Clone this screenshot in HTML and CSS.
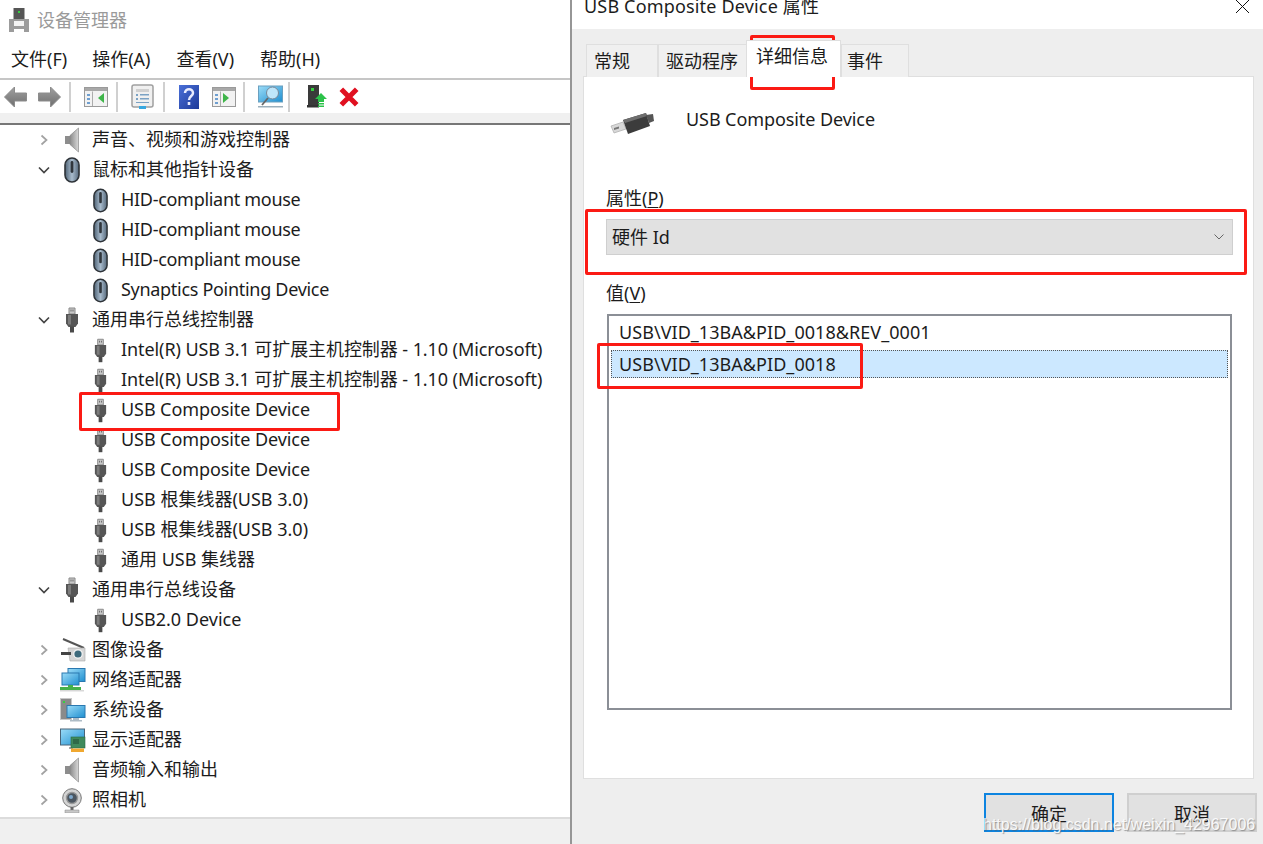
FILE: index.html
```html
<!DOCTYPE html>
<html lang="zh-CN">
<head>
<meta charset="utf-8">
<title>设备管理器</title>
<link rel="stylesheet" href="styles.css">
</head>
<body>
<svg class="defs" aria-hidden="true">
  <defs>
    <linearGradient id="gMouse" x1="0" x2="1" y1="0" y2="0"><stop offset="0" stop-color="#4f6376"/><stop offset=".5" stop-color="#a9bccd"/><stop offset="1" stop-color="#56697c"/></linearGradient>
    <linearGradient id="gSpk" x1="0" x2="1" y1="0" y2="0"><stop offset="0" stop-color="#8c8c8c"/><stop offset="1" stop-color="#d8d8d8"/></linearGradient>
    <linearGradient id="gScreen" x1="0" x2="1" y1="0" y2="1"><stop offset="0" stop-color="#9bdcf8"/><stop offset="1" stop-color="#1f8fd0"/></linearGradient>
    <linearGradient id="gHelp" x1="0" x2="1" y1="0" y2="1"><stop offset="0" stop-color="#4a6fd8"/><stop offset="1" stop-color="#1d3a98"/></linearGradient>
    <linearGradient id="gArrow" x1="0" x2="0" y1="0" y2="1"><stop offset="0" stop-color="#a0a0a0"/><stop offset="1" stop-color="#6e6e6e"/></linearGradient>
    <symbol id="usb" viewBox="0 0 16 25">
      <path d="M5 0.5h6v6H5z" fill="#c9c9c9" stroke="#888"/>
      <path d="M6.5 2h1v2h-1zM8.5 2h1v2h-1z" fill="#666"/>
      <path d="M2 6.5h12V16l-2.5 3.5h-7L2 16z" fill="#565656"/>
      <path d="M4 7.5h3V17H4z" fill="#7c7c7c"/>
      <path d="M6 19h4v6H6z" fill="#4a4a4a"/>
    </symbol>
    <symbol id="mouse" viewBox="0 0 16 26">
      <rect x="1" y="1" width="14" height="24" rx="7" fill="url(#gMouse)" stroke="#2e3338" stroke-width="1.6"/>
      <rect x="6.6" y="4" width="2.8" height="12" rx="1.4" fill="#30363c"/>
    </symbol>
    <symbol id="speaker" viewBox="0 0 16 26">
      <path d="M1 9h5v8H1z" fill="#8d8d8d"/>
      <path d="M6 8.500 14.500 1v24L6 17.500z" fill="url(#gSpk)" stroke="#8a8a8a" stroke-width=".7"/>
    </symbol>
    <symbol id="imaging" viewBox="0 0 26 24">
      <path d="M3 1 24 10" stroke="#555" stroke-width="2"/>
      <path d="M8 10h17v13H10z" fill="#d5d5d5" stroke="#aaa" stroke-width=".6"/>
      <path d="M1 14h10v3H1z" fill="#444"/>
      <circle cx="18" cy="16" r="4.300" fill="#3e6a7c" stroke="#eee" stroke-width="1.400"/>
    </symbol>
    <symbol id="network" viewBox="0 0 26 24">
      <rect x="8" y="0.500" width="17" height="13" fill="url(#gScreen)" stroke="#2a78b0"/>
      <rect x="2" y="5" width="17" height="12" fill="url(#gScreen)" stroke="#2a78b0"/>
      <path d="M8 17h5v2h8v3H0v-3h8z" fill="#46b04a"/>
      <path d="M0 22h24v1.500H0z" fill="#d8d8d8"/>
    </symbol>
    <symbol id="system" viewBox="0 0 26 24">
      <rect x="0.500" y="0.500" width="11" height="21" fill="#8a8a8a" stroke="#c8c8c8"/>
      <path d="M3 3h2v2H3z" fill="#35d040"/>
      <rect x="7" y="7.500" width="18" height="12" fill="url(#gScreen)" stroke="#2a78b0"/>
      <path d="M13 20h6v2h3v1.500H10V22h3z" fill="#aebcc6"/>
    </symbol>
    <symbol id="display" viewBox="0 0 26 24">
      <rect x="0.500" y="1" width="24" height="16" fill="url(#gScreen)" stroke="#4a6478"/>
      <path d="M9 19h4v2H9z" fill="#aaa"/>
      <rect x="11" y="9" width="14" height="11" fill="#3f8a5c" stroke="#2a6a44" stroke-width=".6"/>
      <path d="M13 11h6v5h-6z" fill="#2e6a48"/>
      <path d="M11 20.500h13V24H11z" fill="#f0a830"/>
    </symbol>
    <symbol id="webcam" viewBox="0 0 20 25">
      <circle cx="10" cy="10" r="9.300" fill="#d4d4d4" stroke="#777"/>
      <circle cx="10" cy="10" r="5.500" fill="#4c5660" stroke="#999" stroke-width="1.400"/>
      <circle cx="9" cy="9" r="2" fill="#7fa8cc"/>
      <path d="M8.500 19h3v3h-3z" fill="#666"/>
      <path d="M3 22h14v3H3z" fill="#c8c8c8" stroke="#888" stroke-width=".5"/>
    </symbol>
    <symbol id="chev-r" viewBox="0 0 10 12"><path d="M2.500 1.500 7.500 6l-5 4.500" fill="none" stroke="#a2a2a2" stroke-width="1.700"/></symbol>
    <symbol id="chev-d" viewBox="0 0 12 10"><path d="M1 2.500 6 7.500l5-5" fill="none" stroke="#444" stroke-width="1.700"/></symbol>
    <symbol id="panel" viewBox="0 0 24 20">
      <rect x=".5" y=".5" width="23" height="19" fill="#f2f2f2" stroke="#9a9a9a"/>
      <path d="M1 1h22v3H1z" fill="#a8a8a8"/>
      <path d="M8 4.500h.8V19H8z" fill="#9a9a9a"/>
      <path d="M3 7h3v2H3zM3 11h3v2H3zM3 15h3v2H3z" fill="#6f9fd0"/>
    </symbol>
  </defs>
</svg>

<main class="manager">
  <header class="titlebar">
    <svg class="app-icon" viewBox="0 0 20 24" aria-hidden="true">
      <path d="M7 0h11v11H7z" transform="translate(-2.500 0)" fill="#555"/><path d="M9 3h2v2H9z" fill="#35d040"/>
      <path d="M0 11h20v13h-5v-3H5v3H0z" fill="#9c9c9c"/><path d="M5 13h10v5H5z" fill="#f4f4f4"/>
    </svg>
    <span class="app-title">设备管理器</span>
  </header>
  <nav class="menubar">
    <span class="menu-first">文件(F)</span><span>操作(A)</span><span>查看(V)</span><span>帮助(H)</span>
  </nav>
  <div class="toolbar">
    <svg class="tb tb-arrow" viewBox="0 0 24 22"><path d="M11 1 1 11l10 10v-6h12V7H11z" fill="url(#gArrow)" stroke="#8c8c8c"/></svg>
    <svg class="tb tb-arrow tb-arrow2" viewBox="0 0 24 22"><path d="M13 1l10 10-10 10v-6H1V7h12z" fill="url(#gArrow)" stroke="#8c8c8c"/></svg>
    <i class="sep sep1"></i>
    <svg class="tb tb-panel"><use href="#panel"/><path d="M20 6v10l-6-5z" fill="#3fb54a"/></svg>
    <i class="sep sep2"></i>
    <svg class="tb tb-props" viewBox="0 0 23 25"><rect x="1" y="1" width="21" height="22" rx="2" fill="#f0f0f0" stroke="#a0a0a0" stroke-width="1.500"/><path d="M5 5h13v3H5z" fill="#d0d0d0"/><path d="M5 10h2v2H5zM5 14h2v2H5zM9 10h9v1.500H9zM9 14h9v1.500H9zM5 18h13v1H5z" fill="#7ba2c4"/><path d="M8 22h7v3H8z" fill="#38a8e0"/></svg>
    <i class="sep sep3"></i>
    <svg class="tb tb-help" viewBox="0 0 20 24"><rect width="20" height="24" fill="url(#gHelp)"/><path d="M6 8c0-5 8-5 8 0 0 3-4 3-4 7" fill="none" stroke="#e8ecff" stroke-width="2.500"/><path d="M8.700 17h2.600v3H8.700z" fill="#e8ecff"/></svg>
    <svg class="tb tb-panel tb-panel2"><use href="#panel"/><path d="M11 6v10l6-5z" fill="#3fb54a"/></svg>
    <i class="sep sep4"></i>
    <svg class="tb tb-scan" viewBox="0 0 25 24"><rect x=".5" y="1" width="24" height="16" fill="url(#gScreen)" stroke="#6aa0c0"/><circle cx="14.500" cy="8" r="6" fill="#bfe6fa" stroke="#789" stroke-width="1"/><path d="M10 13 4 20" stroke="#666" stroke-width="1.800"/><path d="M0 21h25v1.500H0z" fill="#9cb0bc"/></svg>
    <i class="sep sep5"></i>
    <svg class="tb tb-update" viewBox="0 0 20 24"><path d="M1 0h11v20H1z" fill="#3a3a3a"/><path d="M4 3h3v3H4z" fill="#35d040"/><path d="M0 20h12v2.500H0z" fill="#333"/><path d="M14 8l6 6h-3v3h-6v-3H8z" fill="#2cc24a"/><path d="M11 18h6v1.500h-6zM11 20.500h6V22h-6z" fill="#2cc24a"/></svg>
    <svg class="tb tb-x" viewBox="0 0 20 20"><path d="M3 3l14 14M17 3 3 17" stroke="#e01020" stroke-width="4.600"/></svg>
  </div>
  <div class="band"></div>
  <ul class="tree">
    <li class="row"><svg class="chev"><use href="#chev-r"/></svg><svg class="gicon"><use href="#speaker"/></svg><span>声音、视频和游戏控制器</span></li>
    <li class="row"><svg class="chev"><use href="#chev-d"/></svg><svg class="gicon"><use href="#mouse"/></svg><span>鼠标和其他指针设备</span></li>
    <li class="row child"><svg class="cicon"><use href="#mouse"/></svg><span class="tight">HID-compliant mouse</span></li>
    <li class="row child"><svg class="cicon"><use href="#mouse"/></svg><span class="tight">HID-compliant mouse</span></li>
    <li class="row child"><svg class="cicon"><use href="#mouse"/></svg><span class="tight">HID-compliant mouse</span></li>
    <li class="row child"><svg class="cicon"><use href="#mouse"/></svg><span class="tight">Synaptics Pointing Device</span></li>
    <li class="row"><svg class="chev"><use href="#chev-d"/></svg><svg class="gicon"><use href="#usb"/></svg><span>通用串行总线控制器</span></li>
    <li class="row child"><svg class="cicon"><use href="#usb"/></svg><span class="snug">Intel(R) USB 3.1 可扩展主机控制器 - 1.10 (Microsoft)</span></li>
    <li class="row child"><svg class="cicon"><use href="#usb"/></svg><span class="snug">Intel(R) USB 3.1 可扩展主机控制器 - 1.10 (Microsoft)</span></li>
    <li class="row child"><svg class="cicon"><use href="#usb"/></svg><span class="snug">USB Composite Device</span></li>
    <li class="row child"><svg class="cicon"><use href="#usb"/></svg><span class="snug">USB Composite Device</span></li>
    <li class="row child"><svg class="cicon"><use href="#usb"/></svg><span class="snug">USB Composite Device</span></li>
    <li class="row child"><svg class="cicon"><use href="#usb"/></svg><span>USB 根集线器(USB 3.0)</span></li>
    <li class="row child"><svg class="cicon"><use href="#usb"/></svg><span>USB 根集线器(USB 3.0)</span></li>
    <li class="row child"><svg class="cicon"><use href="#usb"/></svg><span>通用 USB 集线器</span></li>
    <li class="row"><svg class="chev"><use href="#chev-d"/></svg><svg class="gicon"><use href="#usb"/></svg><span>通用串行总线设备</span></li>
    <li class="row child"><svg class="cicon"><use href="#usb"/></svg><span>USB2.0 Device</span></li>
    <li class="row"><svg class="chev"><use href="#chev-r"/></svg><svg class="gicon wide"><use href="#imaging"/></svg><span>图像设备</span></li>
    <li class="row"><svg class="chev"><use href="#chev-r"/></svg><svg class="gicon wide"><use href="#network"/></svg><span>网络适配器</span></li>
    <li class="row"><svg class="chev"><use href="#chev-r"/></svg><svg class="gicon wide"><use href="#system"/></svg><span>系统设备</span></li>
    <li class="row"><svg class="chev"><use href="#chev-r"/></svg><svg class="gicon wide"><use href="#display"/></svg><span>显示适配器</span></li>
    <li class="row"><svg class="chev"><use href="#chev-r"/></svg><svg class="gicon"><use href="#speaker"/></svg><span>音频输入和输出</span></li>
    <li class="row"><svg class="chev"><use href="#chev-r"/></svg><svg class="gicon cam"><use href="#webcam"/></svg><span>照相机</span></li>
  </ul>
  <footer class="statusbar"></footer>
</main>

<section class="dialog">
  <header class="dlg-title">
    <span class="dlg-caption">USB Composite Device 属性</span>
    <svg class="close" viewBox="0 0 16 13" aria-hidden="true"><path d="M0 13 13 0M13 13 0 0" transform="translate(1 0)" stroke="#111" stroke-width="1" fill="none"/></svg>
  </header>
  <div class="dlg-body">
    <div class="tabs">
      <span class="tab t1">常规</span>
      <span class="tab t2">驱动程序</span>
      <span class="tab active">详细信息</span>
      <span class="tab t4">事件</span>
    </div>
    <div class="pane">
      <div class="dev-head">
        <svg class="dev-icon" viewBox="0 0 44 24" aria-hidden="true">
          <path d="M1 14 13 10l3 7L4 21z" fill="#d8d8d8" stroke="#aaa" stroke-width=".7"/>
          <path d="M4 16l5-1.500v2L4 18z" fill="#777"/>
          <path d="M13 8 36 1l4 13-22 8z" fill="#3c3c3c"/>
          <path d="M13 8 36 1l1 3-22 7z" fill="#6e6e6e"/>
          <path d="M36 3l7-1 1 7-5 2z" fill="#555"/>
        </svg>
        <span class="dev-name">USB Composite Device</span>
      </div>
      <label class="field-label prop-label">属性(<u>P</u>)</label>
      <div class="combo">
        <span>硬件 Id</span>
        <svg class="combo-arrow" viewBox="0 0 10 6" aria-hidden="true"><path d="M.5.500 5 5 9.500.500" fill="none" stroke="#666"/></svg>
      </div>
      <label class="field-label val-label">值(<u>V</u>)</label>
      <div class="listbox">
        <div class="item">USB\VID_13BA&amp;PID_0018&amp;REV_0001</div>
        <div class="item selected">USB\VID_13BA&amp;PID_0018</div>
      </div>
    </div>
    <div class="buttons">
      <button class="btn default">确定</button>
      <button class="btn">取消</button>
    </div>
  </div>
</section>

<div class="mark mark-device"></div>
<div class="mark mark-tab"></div>
<div class="mark mark-prop"></div>
<div class="mark mark-val"></div>
<div class="watermark">https://blog.csdn.net/weixin_42967006</div>
</body>
</html>
```

FILE: styles.css
```css
* { box-sizing: border-box; }
html, body { margin: 0; height: 844px; overflow: hidden; }
body {
  display: flex;
  background: #fff;
  color: #1c1c1c;
  font: 18px/24px "Noto Sans", "Noto Sans CJK SC", sans-serif;
}
.defs { width: 0; height: 0; position: absolute; }

.manager { width: 570px; height: 844px; display: flex; flex-direction: column; flex: none; }
.titlebar { height: 40px; display: flex; align-items: center; padding-left: 9px; gap: 8px; }
.app-icon { width: 20px; height: 24px; }
.app-title { color: #9a9a9a; }
.menubar { height: 38px; display: flex; gap: 26px; padding-left: 11px; align-items: center; }
.menu-first { margin-right: -1px; }
.toolbar { height: 35px; border-top: 2px solid #c6c6c6; display: flex; align-items: center; }
.tb { flex: none; display: block; }
.tb-arrow { width: 25px; height: 22px; margin-left: 3px; }
.tb-arrow2 { margin-left: 9px; }
.sep { width: 2px; height: 30px; background: #d0d0d0; flex: none; }
.sep1 { margin-left: 7px; }
.tb-panel { width: 24px; height: 20px; margin-left: 13px; }
.sep2 { margin-left: 8px; }
.tb-props { width: 23px; height: 25px; margin-left: 13px; }
.sep3 { margin-left: 9px; }
.tb-help { width: 20px; height: 24px; margin-left: 14px; }
.tb-panel2 { margin-left: 13px; }
.sep4 { margin-left: 7px; }
.tb-scan { width: 25px; height: 24px; margin-left: 13px; }
.sep5 { margin-left: 5px; }
.tb-update { width: 20px; height: 24px; margin-left: 17px; }
.tb-x { width: 22px; height: 22px; margin-left: 11px; }
.band { height: 12px; background: #f0f0f0; border-bottom: 2px solid #777; }

.tree { list-style: none; margin: 0; padding: 0; flex: none; height: 692px; overflow: hidden; }
.row { height: 30px; display: flex; align-items: center; padding-left: 38px; white-space: nowrap; }
.row span { margin-top: -2px; }
.row .tight { letter-spacing: -.3px; }
.row .snug { letter-spacing: -.08px; }
.row.child { padding-left: 93px; }
.chev { width: 12px; height: 12px; flex: none; }
.gicon { width: 16px; height: 26px; margin-left: 14px; margin-right: 12px; flex: none; }
.gicon.wide { width: 26px; height: 24px; margin-left: 10px; margin-right: 6px; }
.gicon.cam { width: 20px; height: 25px; margin-left: 12px; margin-right: 10px; }
.cicon { width: 15px; height: 25px; margin-right: 13px; flex: none; }
.statusbar { flex: 1; background: #f0f0f0; border-top: 2px solid #dcdcdc; }

.dialog { flex: 1; min-width: 0; height: 844px; border-left: 2px solid #969696; display: flex; flex-direction: column; }
.dlg-title { height: 29px; padding-left: 12px; display: flex; justify-content: space-between; align-items: flex-start; line-height: 12px; flex: none; }
.dlg-caption { letter-spacing: .17px; }
.close { width: 16px; height: 13px; margin-right: 12px; flex: none; }
.dlg-body { flex: 1; background: #eeeeee; padding: 12px 8px 0 11px; display: flex; flex-direction: column; }
.tabs { height: 36px; display: flex; align-items: flex-end; margin-bottom: -1px; padding-left: 3px; position: relative; }
.tab { height: 33px; background: #f0f0f0; border: 1px solid #dfdfdf; border-bottom: 0; display: flex; align-items: center; padding: 0 0 1px 7px; }
.t1 { width: 72px; }
.t2 { width: 92px; margin-right: -4px; }
.active { width: 95px; height: 37px; background: #fff; position: relative; padding: 0 0 6px 9px; z-index: 1; }
.t4 { width: 68px; padding-left: 5px; }
.pane { width: 671px; height: 703px; background: #fff; border: 1px solid #dfdfdf; padding: 0 21px 0 22px; display: flex; flex-direction: column; }
.dev-head { height: 92px; display: flex; padding: 30px 0 0 80px; position: relative; }
.dev-name { letter-spacing: -.08px; }
.dev-icon { width: 44px; height: 24px; position: absolute; left: 4px; top: 35px; }
.field-label { display: block; height: 24px; }
.field-label u { text-underline-offset: 2px; }
.prop-label { margin-top: 17px; }
.combo { width: 627px; height: 36px; margin-top: 9px; background: #e1e1e1; border: 1px solid #cfcfcf; padding: 0 8px 0 5px; display: flex; align-items: center; justify-content: space-between; }
.combo-arrow { width: 10px; height: 6px; }
.val-label { margin-top: 26px; }
.listbox { width: 625px; height: 396px; margin: 9px 0 0 1px; border: 2px solid #8b8f96; padding: 1px 2px; letter-spacing: .05px; }
.item { height: 30px; display: flex; align-items: center; padding-left: 8px; }
.item + .item { height: 28px; margin-top: 3px; }
.selected { background: #cce8ff; border: 1px dotted #555; padding-left: 7px; }
.buttons { display: flex; justify-content: flex-end; gap: 13px; margin: 14px -2px 0 0; }
.btn { width: 130px; height: 39px; background: #e1e1e1; border: 2px solid #cfcfcf; color: #1c1c1c; font: inherit; padding: 3px 0 0; }
.btn.default { border-color: #0d84e0; }

.mark { position: absolute; border: 3px solid #fb1a14; border-radius: 2px; pointer-events: none; }
.mark-device { left: 79px; top: 392px; width: 261px; height: 39px; }
.mark-tab { left: 750px; top: 35px; width: 85px; height: 55px; }
.mark-prop { left: 585px; top: 209px; width: 662px; height: 66px; }
.mark-val { left: 597px; top: 343px; width: 266px; height: 46px; }
.watermark { position: absolute; left: 983px; top: 814px; font: 16px/22px "Liberation Sans", sans-serif; color: rgba(255,255,255,.9); text-shadow: 1px 1px 1px rgba(90,90,90,.55); white-space: nowrap; }
```
